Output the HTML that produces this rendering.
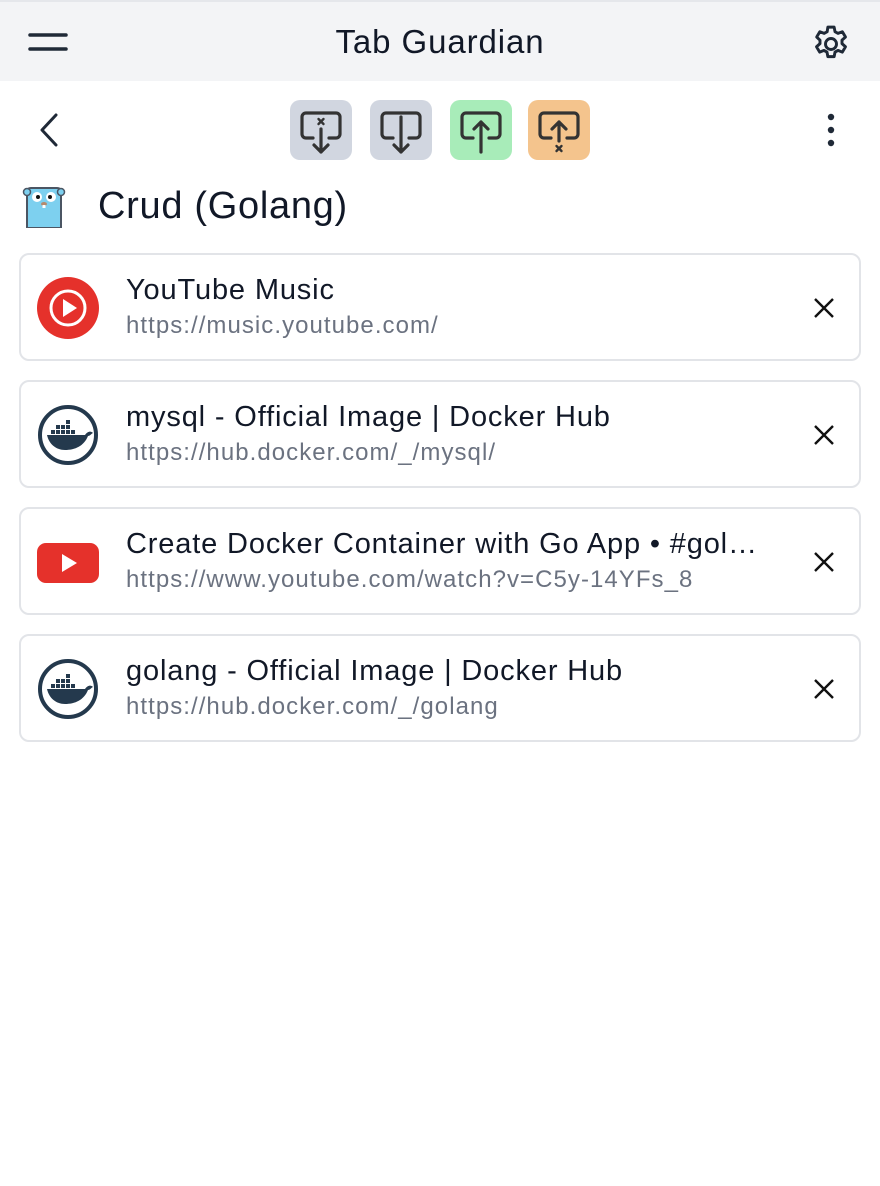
<!DOCTYPE html>
<html><head><meta charset="utf-8"><style>
*{box-sizing:border-box;margin:0;padding:0}
body{width:880px;height:1186px;background:#fff;font-family:"Liberation Sans",Helvetica,Arial,sans-serif;color:#111827;position:relative;overflow:hidden}
.hdr{position:absolute;left:0;top:0;width:880px;height:81px;background:#f3f4f6;border-top:2px solid #e5e7eb}
.hdr .t{position:absolute;left:0;right:0;top:21px;text-align:center;font-size:33px;letter-spacing:0.9px;color:#111827}
.btn{position:absolute;top:100px;width:62px;height:60px;border-radius:10px}
.card{position:absolute;left:19px;width:842px;height:108px;border:2px solid #e2e4e8;border-radius:10px}
.card .ic{position:absolute;left:16px;top:22px;width:62px;height:62px}
.card .ti{position:absolute;left:105px;top:19px;font-size:29px;letter-spacing:0.85px;color:#111827;white-space:nowrap}
.card .u{position:absolute;left:105px;top:57px;font-size:24px;letter-spacing:1.05px;color:#6b7280;white-space:nowrap}
.card .x{position:absolute;left:792px;top:42px;width:22px;height:22px}
</style></head><body>
<div class="hdr">
<svg style="position:absolute;left:28px;top:28px" width="40" height="24"><path d="M2 5H38M2 19H38" stroke="#1f2937" stroke-width="3.5" stroke-linecap="round"/></svg>
<div class="t">Tab Guardian</div>
<svg style="position:absolute;left:809px;top:20px" width="44" height="44" viewBox="0 0 24 24" fill="none" stroke="#1f2937" stroke-width="1.6"><path d="M10.3 2.8h3.4l.5 2.5 1.6.9 2.4-.9 1.7 2.9-1.9 1.7v1.9l1.9 1.7-1.7 2.9-2.4-.9-1.6.9-.5 2.5h-3.4l-.5-2.5-1.6-.9-2.4.9-1.7-2.9 1.9-1.7v-1.9L4.2 8.2l1.7-2.9 2.4.9 1.6-.9z" stroke-linejoin="round"/><circle cx="12" cy="12" r="3"/></svg>
</div>
<svg style="position:absolute;left:36px;top:112px" width="26" height="36"><path d="M20 3L6 18L20 33" fill="none" stroke="#1f2937" stroke-width="3" stroke-linecap="round" stroke-linejoin="round"/></svg>
<div class="btn" style="left:290px;background:#d1d6e0"><svg width="62" height="60"><g fill="none" stroke="#333" stroke-width="3.2" stroke-linecap="round" stroke-linejoin="round"><path d="M23 38h-7a4 4 0 0 1-4-4V17a4 4 0 0 1 4-4h30a4 4 0 0 1 4 4v17a4 4 0 0 1-4 4h-7"/><path d="M31 29v23M24 45l7 7 7-7"/><path d="M28.5 19l5 5M33.5 19l-5 5" stroke-width="2.4"/></g></svg></div>
<div class="btn" style="left:370px;background:#d1d6e0"><svg width="62" height="60"><g fill="none" stroke="#333" stroke-width="3.2" stroke-linecap="round" stroke-linejoin="round"><path d="M23 38h-7a4 4 0 0 1-4-4V17a4 4 0 0 1 4-4h30a4 4 0 0 1 4 4v17a4 4 0 0 1-4 4h-7"/><path d="M31 17v35M24 45l7 7 7-7"/></g></svg></div>
<div class="btn" style="left:450px;background:#a8ecb9"><svg width="62" height="60"><g fill="none" stroke="#333" stroke-width="3.2" stroke-linecap="round" stroke-linejoin="round"><path d="M23 38h-7a4 4 0 0 1-4-4V17a4 4 0 0 1 4-4h30a4 4 0 0 1 4 4v17a4 4 0 0 1-4 4h-7"/><path d="M31 52V22M24 29l7-7 7 7"/></g></svg></div>
<div class="btn" style="left:528px;background:#f4c48d"><svg width="62" height="60"><g fill="none" stroke="#333" stroke-width="3.2" stroke-linecap="round" stroke-linejoin="round"><path d="M23 38h-7a4 4 0 0 1-4-4V17a4 4 0 0 1 4-4h30a4 4 0 0 1 4 4v17a4 4 0 0 1-4 4h-7"/><path d="M31 41V22M24 29l7-7 7 7"/><path d="M28.5 46l5 5M33.5 46l-5 5" stroke-width="2.4"/></g></svg></div>
<svg style="position:absolute;left:824px;top:112px" width="14" height="36"><circle cx="7" cy="5" r="3.2" fill="#1f2937"/><circle cx="7" cy="18" r="3.2" fill="#1f2937"/><circle cx="7" cy="31" r="3.2" fill="#1f2937"/></svg>
<svg style="position:absolute;left:22px;top:184px" width="44" height="44"><path d="M5 10a5 4 0 0 1 5-6h24a5 4 0 0 1 5 6v34H5z" fill="#7dd0ef" stroke="#4b5563" stroke-width="2"/><circle cx="5" cy="8" r="3.5" fill="#7dd0ef" stroke="#4b5563" stroke-width="1.5"/><circle cx="39" cy="8" r="3.5" fill="#7dd0ef" stroke="#4b5563" stroke-width="1.5"/><circle cx="15" cy="13" r="5" fill="#fff"/><circle cx="29" cy="13" r="5" fill="#fff"/><circle cx="16" cy="13" r="2" fill="#111"/><circle cx="28" cy="13" r="2" fill="#111"/><ellipse cx="22" cy="20" rx="3" ry="2" fill="#b58a6e"/><rect x="20.5" y="21" width="3" height="3" fill="#fff"/></svg>
<div style="position:absolute;left:98px;top:185px;font-size:38px;letter-spacing:0.7px;color:#111827">Crud (Golang)</div>

<div class="card" style="top:253px"><svg class="ic" viewBox="0 0 62 62"><circle cx="31" cy="31" r="31" fill="#e5312b"/><circle cx="31" cy="31" r="17" fill="none" stroke="#fff" stroke-width="3"/><path d="M26 22v18l14-9z" fill="#fff"/></svg><div class="ti">YouTube Music</div><div class="u">https://music.youtube.com/</div><svg class="x" viewBox="0 0 22 22"><path d="M2 2L20 20M20 2L2 20" stroke="#111" stroke-width="2.4"/></svg></div>

<div class="card" style="top:380px"><svg class="ic" viewBox="0 0 62 62"><circle cx="31" cy="31" r="28" fill="#fff" stroke="#24394d" stroke-width="4"/><path d="M10 31h38c3-4 6-4 8-2-2 1-3 3-5 3-4 10-13 14-23 14-9 0-16-6-18-15z" fill="#24394d"/><g fill="#24394d"><rect x="14" y="26" width="4" height="4"/><rect x="19" y="26" width="4" height="4"/><rect x="24" y="26" width="4" height="4"/><rect x="29" y="26" width="4" height="4"/><rect x="34" y="26" width="4" height="4"/><rect x="19" y="21" width="4" height="4"/><rect x="24" y="21" width="4" height="4"/><rect x="29" y="21" width="4" height="4"/><rect x="29" y="16" width="4" height="4"/></g></svg><div class="ti">mysql - Official Image | Docker Hub</div><div class="u">https://hub.docker.com/_/mysql/</div><svg class="x" viewBox="0 0 22 22"><path d="M2 2L20 20M20 2L2 20" stroke="#111" stroke-width="2.4"/></svg></div>

<div class="card" style="top:507px"><svg class="ic" viewBox="0 0 62 62"><rect x="0" y="12" width="62" height="40" rx="9" fill="#e5312b"/><path d="M25 23v18l15-9z" fill="#fff"/></svg><div class="ti">Create Docker Container with Go App • #gol…</div><div class="u">https://www.youtube.com/watch?v=C5y-14YFs_8</div><svg class="x" viewBox="0 0 22 22"><path d="M2 2L20 20M20 2L2 20" stroke="#111" stroke-width="2.4"/></svg></div>

<div class="card" style="top:634px"><svg class="ic" viewBox="0 0 62 62"><circle cx="31" cy="31" r="28" fill="#fff" stroke="#24394d" stroke-width="4"/><path d="M10 31h38c3-4 6-4 8-2-2 1-3 3-5 3-4 10-13 14-23 14-9 0-16-6-18-15z" fill="#24394d"/><g fill="#24394d"><rect x="14" y="26" width="4" height="4"/><rect x="19" y="26" width="4" height="4"/><rect x="24" y="26" width="4" height="4"/><rect x="29" y="26" width="4" height="4"/><rect x="34" y="26" width="4" height="4"/><rect x="19" y="21" width="4" height="4"/><rect x="24" y="21" width="4" height="4"/><rect x="29" y="21" width="4" height="4"/><rect x="29" y="16" width="4" height="4"/></g></svg><div class="ti">golang - Official Image | Docker Hub</div><div class="u">https://hub.docker.com/_/golang</div><svg class="x" viewBox="0 0 22 22"><path d="M2 2L20 20M20 2L2 20" stroke="#111" stroke-width="2.4"/></svg></div>
</body></html>
